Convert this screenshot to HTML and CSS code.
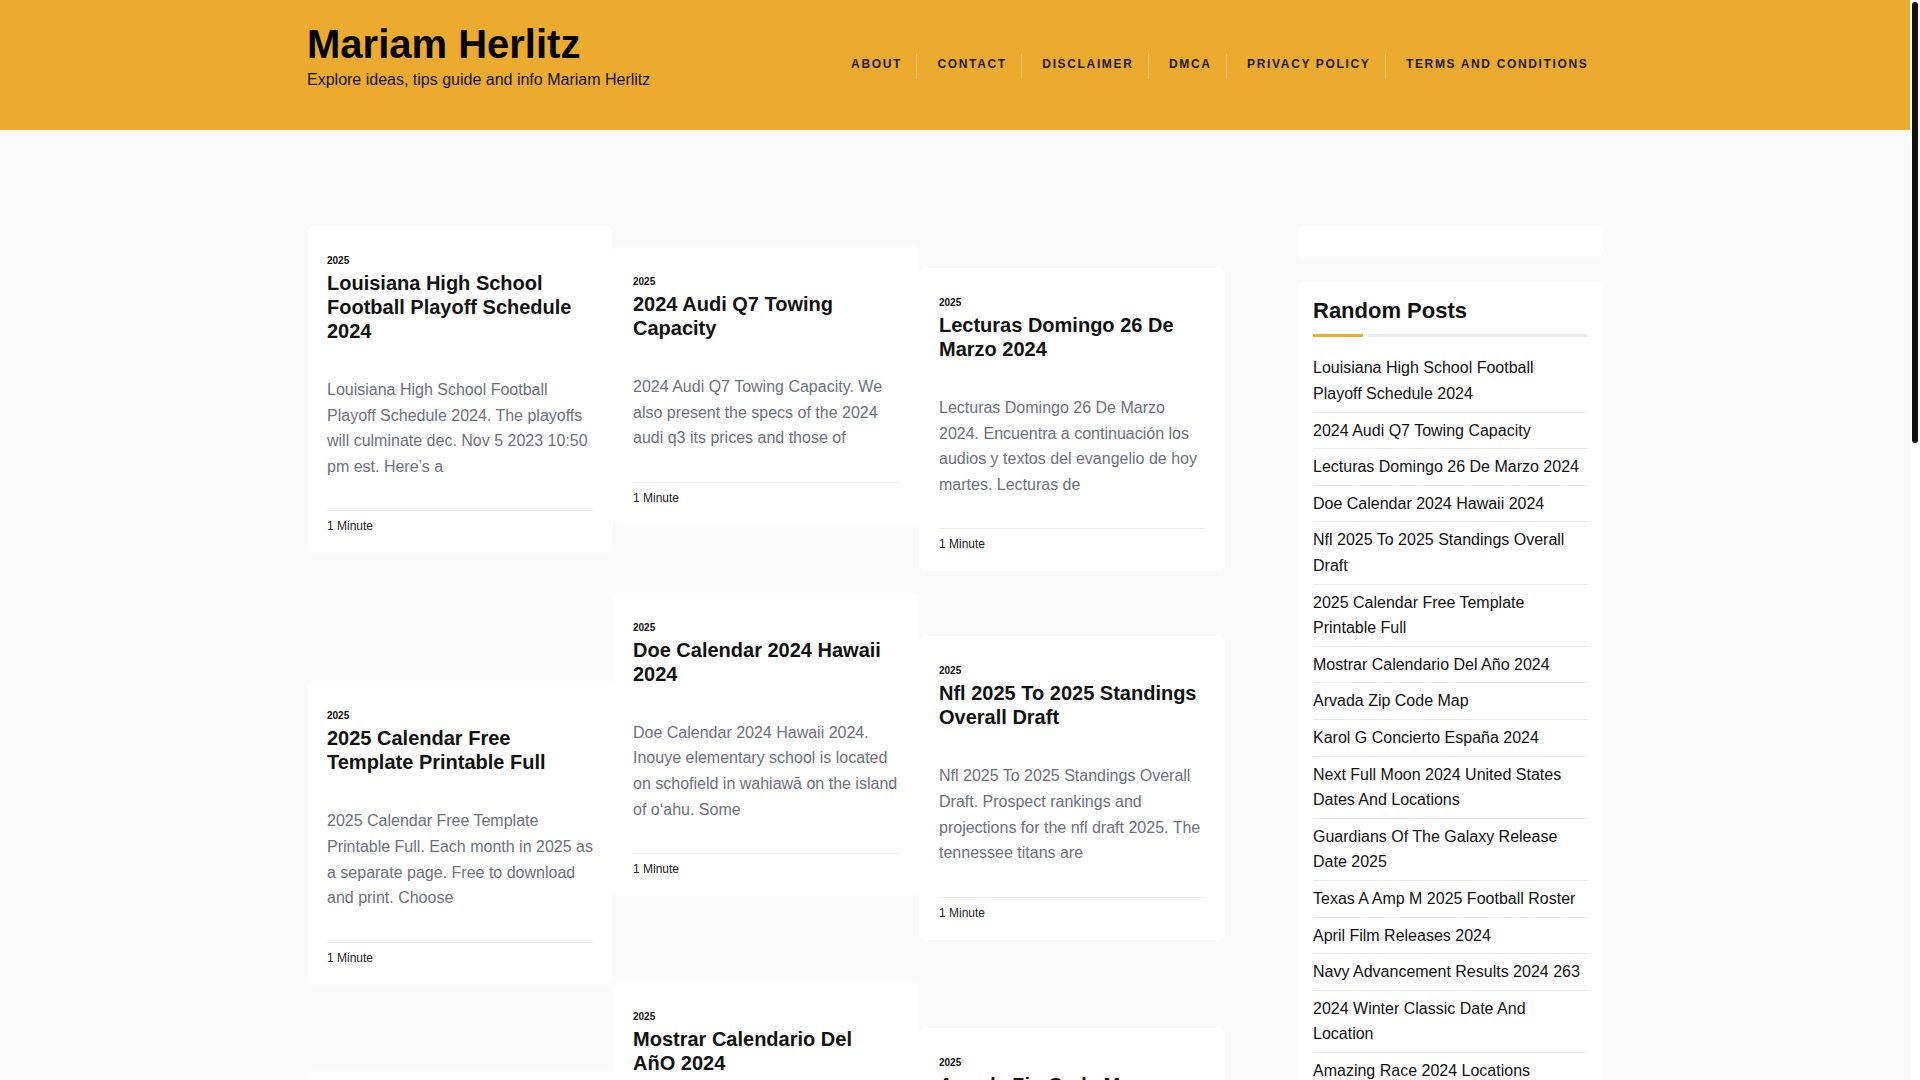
FILE: index.html
```html
<!DOCTYPE html>
<html lang="en">
<head>
    <meta charset="UTF-8">
    <meta name="viewport" content="width=device-width, initial-scale=1.0">
    <title>Mariam Herlitz</title>
    <link rel="stylesheet" href="styles.css">
</head>
<body>
    <header class="site-header">
        <div class="container header-inner">
            <div class="branding">
                <h1 class="site-title"><a href="#">Mariam Herlitz</a></h1>
                <p class="site-desc">Explore ideas, tips guide and info Mariam Herlitz</p>
            </div>
            <nav class="main-nav">
                <ul>
                    <li><a href="#">About</a></li>
                    <li><a href="#">Contact</a></li>
                    <li><a href="#">Disclaimer</a></li>
                    <li><a href="#">DMCA</a></li>
                    <li><a href="#">Privacy Policy</a></li>
                    <li><a href="#">Terms and Conditions</a></li>
                </ul>
            </nav>
        </div>
    </header>

    <div class="container site-content">
        <!-- Post grid, three columns -->
        <main class="posts">
            <div class="col col-1">
                <article class="card">
                    <div class="card-meta">2025</div>
                    <h2 class="card-title"><a href="#">Louisiana High School Football Playoff Schedule 2024</a></h2>
                    <p class="card-excerpt">Louisiana High School Football Playoff Schedule 2024. The playoffs will culminate dec. Nov 5 2023 10:50 pm est. Here’s a</p>
                    <div class="card-footer">1 Minute</div>
                </article>
                <article class="card">
                    <div class="card-meta">2025</div>
                    <h2 class="card-title"><a href="#">2025 Calendar Free Template Printable Full</a></h2>
                    <p class="card-excerpt">2025 Calendar Free Template Printable Full. Each month in 2025 as a separate page. Free to download and print. Choose</p>
                    <div class="card-footer">1 Minute</div>
                </article>
                <article class="card">
                    <div class="card-meta">2025</div>
                    <h2 class="card-title"><a href="#">Karol G Concierto España 2024</a></h2>
                    <p class="card-excerpt">Karol G Concierto España 2024. La cantante colombiana anuncia nuevas fechas de su gira mundial. Las entradas estarán</p>
                    <div class="card-footer">1 Minute</div>
                </article>
                <article class="card">
                    <div class="card-meta">2025</div>
                    <h2 class="card-title"><a href="#">Texas A Amp M 2025 Football Roster</a></h2>
                    <p class="card-excerpt">Texas A Amp M 2025 Football Roster. The full roster for the aggies with positions, height and weight of each</p>
                    <div class="card-footer">1 Minute</div>
                </article>
                <article class="card">
                    <div class="card-meta">2025</div>
                    <h2 class="card-title"><a href="#">Amazing Race 2024 Locations</a></h2>
                    <p class="card-excerpt">Amazing Race 2024 Locations. The teams travel across several continents this season. Here is every stop on the</p>
                    <div class="card-footer">1 Minute</div>
                </article>
            </div>

            <div class="col col-2">
                <article class="card">
                    <div class="card-meta">2025</div>
                    <h2 class="card-title"><a href="#">2024 Audi Q7 Towing Capacity</a></h2>
                    <p class="card-excerpt">2024 Audi Q7 Towing Capacity. We also present the specs of the 2024 audi q3 its prices and those of</p>
                    <div class="card-footer">1 Minute</div>
                </article>
                <article class="card">
                    <div class="card-meta">2025</div>
                    <h2 class="card-title"><a href="#">Doe Calendar 2024 Hawaii 2024</a></h2>
                    <p class="card-excerpt">Doe Calendar 2024 Hawaii 2024. Inouye elementary school is located on schofield in wahiawā on the island of oʻahu. Some</p>
                    <div class="card-footer">1 Minute</div>
                </article>
                <article class="card">
                    <div class="card-meta">2025</div>
                    <h2 class="card-title"><a href="#">Mostrar Calendario Del AñO 2024</a></h2>
                    <p class="card-excerpt">Mostrar Calendario Del Año 2024. Calendario con los días festivos y feriados nacionales. Puedes descargar e imprimir</p>
                    <div class="card-footer">1 Minute</div>
                </article>
                <article class="card">
                    <div class="card-meta">2025</div>
                    <h2 class="card-title"><a href="#">Guardians Of The Galaxy Release Date 2025</a></h2>
                    <p class="card-excerpt">Guardians Of The Galaxy Release Date 2025. Everything we know so far about the next chapter of the</p>
                    <div class="card-footer">1 Minute</div>
                </article>
                <article class="card">
                    <div class="card-meta">2025</div>
                    <h2 class="card-title"><a href="#">Navy Advancement Results 2024 263</a></h2>
                    <p class="card-excerpt">Navy Advancement Results 2024 263. Results for the active duty cycle are now available online. Sailors can check</p>
                    <div class="card-footer">1 Minute</div>
                </article>
            </div>

            <div class="col col-3">
                <article class="card">
                    <div class="card-meta">2025</div>
                    <h2 class="card-title"><a href="#">Lecturas Domingo 26 De Marzo 2024</a></h2>
                    <p class="card-excerpt">Lecturas Domingo 26 De Marzo 2024. Encuentra a continuación los audios y textos del evangelio de hoy martes. Lecturas de</p>
                    <div class="card-footer">1 Minute</div>
                </article>
                <article class="card">
                    <div class="card-meta">2025</div>
                    <h2 class="card-title"><a href="#">Nfl 2025 To 2025 Standings Overall Draft</a></h2>
                    <p class="card-excerpt">Nfl 2025 To 2025 Standings Overall Draft. Prospect rankings and projections for the nfl draft 2025. The tennessee titans are</p>
                    <div class="card-footer">1 Minute</div>
                </article>
                <article class="card">
                    <div class="card-meta">2025</div>
                    <h2 class="card-title"><a href="#">Arvada Zip Code Map</a></h2>
                    <p class="card-excerpt">Arvada Zip Code Map. Find the boundaries of every zip code in arvada colorado. The interactive map shows the</p>
                    <div class="card-footer">1 Minute</div>
                </article>
                <article class="card">
                    <div class="card-meta">2025</div>
                    <h2 class="card-title"><a href="#">Next Full Moon 2024 United States Dates And Locations</a></h2>
                    <p class="card-excerpt">Next Full Moon 2024 United States Dates And Locations. The moon will be full on these nights. Look to the</p>
                    <div class="card-footer">1 Minute</div>
                </article>
                <article class="card">
                    <div class="card-meta">2025</div>
                    <h2 class="card-title"><a href="#">April Film Releases 2024</a></h2>
                    <p class="card-excerpt">April Film Releases 2024. The biggest movies coming to theaters this month. From blockbusters to small</p>
                    <div class="card-footer">1 Minute</div>
                </article>
            </div>
        </main>

        <!-- Sidebar -->
        <aside class="sidebar">
            <div class="widget widget-empty"></div>
            <div class="widget">
                <h3 class="widget-title">Random Posts</h3>
                <div class="title-bar"></div>
                <ul class="post-list">
                    <li><a href="#">Louisiana High School Football Playoff Schedule 2024</a></li>
                    <li><a href="#">2024 Audi Q7 Towing Capacity</a></li>
                    <li><a href="#">Lecturas Domingo 26 De Marzo 2024</a></li>
                    <li><a href="#">Doe Calendar 2024 Hawaii 2024</a></li>
                    <li><a href="#">Nfl 2025 To 2025 Standings Overall Draft</a></li>
                    <li><a href="#">2025 Calendar Free Template Printable Full</a></li>
                    <li><a href="#">Mostrar Calendario Del Año 2024</a></li>
                    <li><a href="#">Arvada Zip Code Map</a></li>
                    <li><a href="#">Karol G Concierto España 2024</a></li>
                    <li><a href="#">Next Full Moon 2024 United States Dates And Locations</a></li>
                    <li><a href="#">Guardians Of The Galaxy Release Date 2025</a></li>
                    <li><a href="#">Texas A Amp M 2025 Football Roster</a></li>
                    <li><a href="#">April Film Releases 2024</a></li>
                    <li><a href="#">Navy Advancement Results 2024 263</a></li>
                    <li><a href="#">2024 Winter Classic Date And Location</a></li>
                    <li><a href="#">Amazing Race 2024 Locations</a></li>
                    <li><a href="#">Ohio State Football Schedule 2024</a></li>
                    <li><a href="#">Easter Sunday 2025 Date</a></li>
                </ul>
            </div>
        </aside>
    </div>

    <footer class="site-footer">
        <div class="container">Copyright © 2025 Mariam Herlitz</div>
    </footer>

    <!-- page scrollbar as seen in the browser window -->
    <div class="scrollbar"><div class="scrollbar-thumb"></div></div>
</body>
</html>
```

FILE: styles.css
```css
body {
    margin: 0;
    padding-right: 10px;
    background-color: #fafafa;
    font-family: "Liberation Sans", Arial, sans-serif;
    color: #111;
}
a {
    color: inherit;
    text-decoration: none;
}
.container {
    width: 1296px;
    margin: 0 auto;
}

/* header */
.site-header {
    background-color: #ecab2e;
    height: 130px;
}
.header-inner {
    display: flex;
    justify-content: space-between;
    align-items: flex-start;
    padding-top: 20px;
}
.site-title {
    margin: 0;
    font-size: 40px;
    line-height: 48px;
    font-weight: 700;
    color: #000;
}
.site-desc {
    margin: 0;
    font-size: 16px;
    line-height: 24px;
    color: #111;
}
.main-nav ul {
    list-style: none;
    margin: 34px 0 0;
    padding: 0;
    display: flex;
}
.main-nav li {
    padding: 0 14.5px 0 20px;
    border-left: 1px solid rgba(255, 255, 255, 0.3);
}
.main-nav li:first-child {
    border-left: none;
}
.main-nav a {
    display: block;
    font-size: 12px;
    line-height: 20px;
    padding-bottom: 5px;
    font-weight: 700;
    letter-spacing: 1.65px;
    text-transform: uppercase;
    color: #1a1a1a;
}

/* content */
.site-content {
    display: flex;
    align-items: flex-start;
    gap: 72px;
    padding-top: 96px;
}
.posts {
    width: 918px;
    display: grid;
    grid-template-columns: repeat(3, 1fr);
    align-items: start;
}
.col {
    display: flex;
    flex-direction: column;
}
.col-2 {
    margin-top: 21px;
}
.col-3 {
    margin-top: 42px;
}
.col .card + .card {
    margin-top: 86px;
}
.col-1 .card:nth-child(2) {
    margin-top: 128px;
}
.col-2 .card:nth-child(2) {
    margin-top: 68px;
}
.col-3 .card:nth-child(2) {
    margin-top: 65px;
}
.col-3 .card:nth-child(3) {
    margin-top: 88px;
}
.card {
    background: #fff;
    border-radius: 6px;
    padding: 27px 20px 18px;
}
.card-meta {
    font-size: 10px;
    line-height: 15px;
    font-weight: 700;
    margin-bottom: 3px;
}
.card-title {
    margin: 0 0 34px;
    padding-right: 4px;
    font-size: 20px;
    line-height: 24px;
    font-weight: 700;
    color: #111;
}
.card-excerpt {
    margin: 0 0 31px;
    font-size: 16px;
    line-height: 1.6;
    color: #6b7280;
}
.card-footer {
    border-top: 1px solid #ececec;
    padding-top: 6px;
    font-size: 12px;
    line-height: 18px;
    color: #222;
}

/* sidebar */
.sidebar {
    width: 306px;
}
.widget {
    background: #fff;
    border-radius: 6px;
    padding: 16px;
    margin-bottom: 25px;
}
.widget-empty {
    height: 31px;
    padding: 0;
}
.widget-title {
    margin: 0;
    font-size: 22px;
    line-height: 26.4px;
    font-weight: 700;
}
.title-bar {
    display: flex;
    gap: 5px;
    margin: 10px 0 13px;
}
.title-bar::before {
    content: "";
    width: 50px;
    height: 3px;
    background: #ecab2e;
}
.title-bar::after {
    content: "";
    flex: 1;
    height: 3px;
    background: #ececec;
}
.post-list {
    list-style: none;
    margin: 0;
    padding: 0;
}
.post-list li {
    padding: 5px 3px 5px 0;
    border-bottom: 1px solid #e9e9e9;
    font-size: 16px;
    line-height: 1.6;
}

.site-footer {
    margin-top: 80px;
    padding: 30px 0;
    background: #fff;
    font-size: 14px;
    color: #555;
}

/* window scrollbar */
.scrollbar {
    position: fixed;
    top: 0;
    right: 0;
    width: 10px;
    height: 100vh;
    background: #fff;
}
.scrollbar-thumb {
    margin: 2px 2px 0;
    height: 441px;
    background: #111;
    border-radius: 3px;
}
```
